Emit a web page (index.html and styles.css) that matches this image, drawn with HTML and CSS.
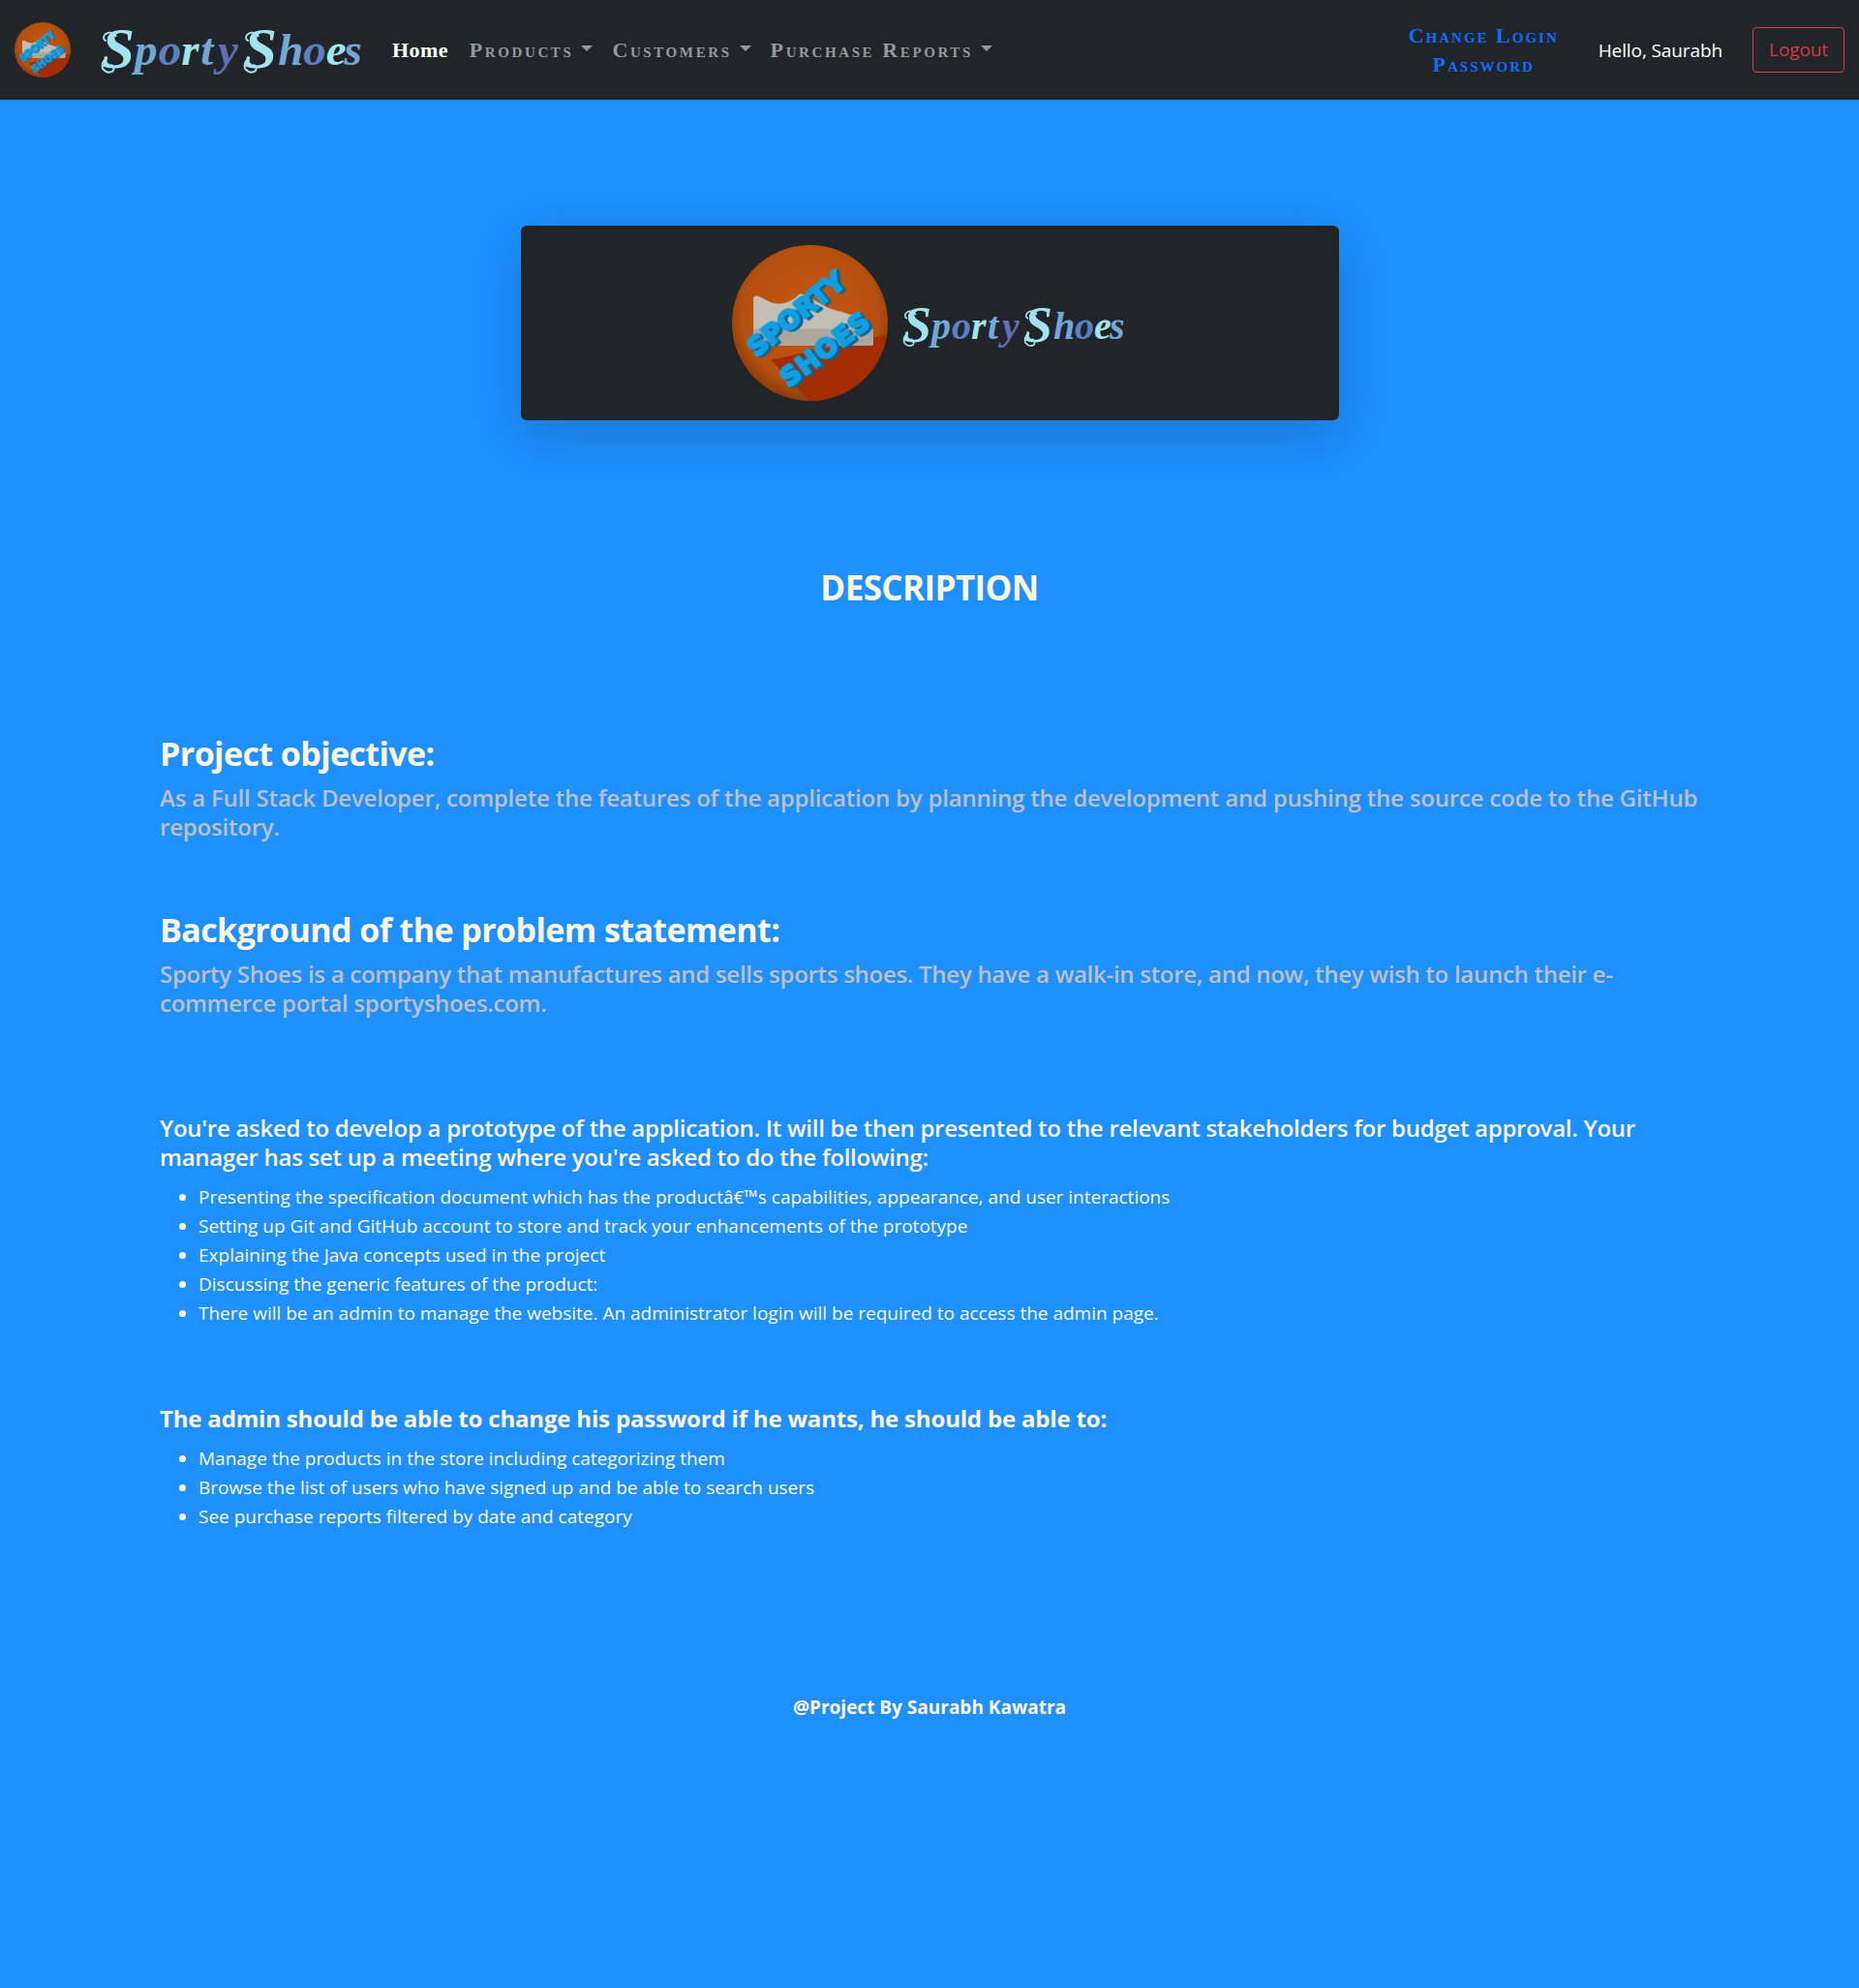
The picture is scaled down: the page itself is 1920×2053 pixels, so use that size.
FILE: index.html
```html
<!DOCTYPE html>
<html lang="en">
<head>
<meta charset="utf-8">
<title>Sporty Shoes</title>
<link rel="stylesheet" href="styles.css">
</head>
<body>
<nav class="navbar">
  <a class="brand" href="#">
    <svg class="badge badge-small" viewBox="0 0 160 160" preserveAspectRatio="none" aria-hidden="true">
      <defs>
        <radialGradient id="orbA" cx="50%" cy="45%" r="55%"><stop offset="0" stop-color="#c4580f"/><stop offset=".8" stop-color="#b54f0f"/><stop offset="1" stop-color="#8c3c0c"/></radialGradient>
        <clipPath id="orbClipA"><circle cx="80" cy="80" r="80"/></clipPath>
      </defs>
      <circle cx="80" cy="80" r="80" fill="url(#orbA)"/>
      <polygon points="40,118 80,160 170,160 170,90 145,95" fill="#a32c02" clip-path="url(#orbClipA)"/>
      <path class="shoe" d="M22 54q2-3 6-1l12 6q16 5 30-9l4 1 26 14 24 7q20 6 21 26v3q0 2-3 2H25q-3 0-3-3z"/>
      <path class="shoe-sole" d="M22 86h123v13q0 3-3 3H25q-3 0-3-3z"/>
      <text class="badge-word" x="0" y="0" transform="translate(25 116) rotate(-39)">SPORTY</text>
      <text class="badge-word word-shoes" x="0" y="0" transform="translate(58 147) rotate(-37)">SHOES</text>
    </svg>
    <svg class="wordmark wordmark-large" viewBox="0 0 227 40" preserveAspectRatio="none" aria-hidden="true">
      <text class="wm" y="30"><tspan class="c1 cap" x="0" y="33">S</tspan><tspan class="c2" x="29" y="30">p</tspan><tspan class="c3" x="50">o</tspan><tspan class="c1" x="70">r</tspan><tspan class="c2" x="87">t</tspan><tspan class="c4" x="102">y</tspan><tspan class="c1 cap" x="125" y="33">S</tspan><tspan class="c2" x="155" y="30">h</tspan><tspan class="c3" x="177">o</tspan><tspan class="c1" x="197">e</tspan><tspan class="c2" x="213">s</tspan></text>
      <path class="curl" d="M13 5Q8-1 3 3Q0 7 4 9M5 24Q-1 28 1 34Q5 39 10 36Q12 32 8 30M138 5Q133-1 128 3Q125 7 129 9M130 24Q124 28 126 34Q130 39 135 36Q137 32 133 30"/>
    </svg>
  </a>
  <ul class="nav-links">
    <li><a class="nav-home" href="#">Home</a></li>
    <li><a class="nav-menu" href="#">Products</a></li>
    <li><a class="nav-menu" href="#">Customers</a></li>
    <li><a class="nav-menu" href="#">Purchase Reports</a></li>
  </ul>
  <div class="nav-right">
    <a class="change-password" href="#">Change Login<br>Password</a>
    <span class="hello">Hello, Saurabh</span>
    <a class="logout" href="#">Logout</a>
  </div>
</nav>

<main class="page">
  <div class="hero-card">
    <svg class="badge badge-large" viewBox="0 0 160 160" aria-hidden="true">
      <defs>
        <radialGradient id="orbB" cx="50%" cy="45%" r="55%"><stop offset="0" stop-color="#c4580f"/><stop offset=".8" stop-color="#b54f0f"/><stop offset="1" stop-color="#8c3c0c"/></radialGradient>
        <clipPath id="orbClipB"><circle cx="80" cy="80" r="80"/></clipPath>
      </defs>
      <circle cx="80" cy="80" r="80" fill="url(#orbB)"/>
      <polygon points="40,118 80,160 170,160 170,90 145,95" fill="#a32c02" clip-path="url(#orbClipB)"/>
      <path class="shoe" d="M22 54q2-3 6-1l12 6q16 5 30-9l4 1 26 14 24 7q20 6 21 26v3q0 2-3 2H25q-3 0-3-3z"/>
      <path class="shoe-sole" d="M22 86h123v13q0 3-3 3H25q-3 0-3-3z"/>
      <text class="badge-word" x="0" y="0" transform="translate(25 116) rotate(-39)">SPORTY</text>
      <text class="badge-word word-shoes" x="0" y="0" transform="translate(58 147) rotate(-37)">SHOES</text>
    </svg>
    <svg class="wordmark wordmark-hero" viewBox="0 0 227 40" preserveAspectRatio="none" aria-hidden="true">
      <text class="wm" y="30"><tspan class="c1 cap" x="0" y="33">S</tspan><tspan class="c2" x="29" y="30">p</tspan><tspan class="c3" x="50">o</tspan><tspan class="c1" x="70">r</tspan><tspan class="c2" x="87">t</tspan><tspan class="c4" x="102">y</tspan><tspan class="c1 cap" x="125" y="33">S</tspan><tspan class="c2" x="155" y="30">h</tspan><tspan class="c3" x="177">o</tspan><tspan class="c1" x="197">e</tspan><tspan class="c2" x="213">s</tspan></text>
      <path class="curl" d="M13 5Q8-1 3 3Q0 7 4 9M5 24Q-1 28 1 34Q5 39 10 36Q12 32 8 30M138 5Q133-1 128 3Q125 7 129 9M130 24Q124 28 126 34Q130 39 135 36Q137 32 133 30"/>
    </svg>
  </div>

  <h1 class="title">DESCRIPTION</h1>

  <section class="intro intro-first">
    <h2>Project objective:</h2>
    <p>As a Full Stack Developer, complete the features of the application by planning the development and pushing the source code to the GitHub repository.</p>
  </section>

  <section class="intro intro-second">
    <h2>Background of the problem statement:</h2>
    <p>Sporty Shoes is a company that manufactures and sells sports shoes. They have a walk-in store, and now, they wish to launch their e-commerce portal sportyshoes.com.</p>
  </section>

  <section class="tasks tasks-first">
    <h3>You're asked to develop a prototype of the application. It will be then presented to the relevant stakeholders for budget approval. Your manager has set up a meeting where you're asked to do the following:</h3>
    <ul>
      <li>Presenting the specification document which has the productâ€™s capabilities, appearance, and user interactions</li>
      <li>Setting up Git and GitHub account to store and track your enhancements of the prototype</li>
      <li>Explaining the Java concepts used in the project</li>
      <li>Discussing the generic features of the product:</li>
      <li>There will be an admin to manage the website. An administrator login will be required to access the admin page.</li>
    </ul>
  </section>

  <section class="tasks tasks-second">
    <h3 class="strong">The admin should be able to change his password if he wants, he should be able to:</h3>
    <ul>
      <li>Manage the products in the store including categorizing them</li>
      <li>Browse the list of users who have signed up and be able to search users</li>
      <li>See purchase reports filtered by date and category</li>
    </ul>
  </section>

  <footer class="credit">@Project By Saurabh Kawatra</footer>
</main>
</body>
</html>
```
FILE: styles.css
```css
* { box-sizing: border-box; }
html, body { margin: 0; padding: 0; }
body {
  min-height: 2053px;
  background: #1e90ff;
  color: #fff8dc;
  font-family: "Open Sans", "Noto Sans", sans-serif;
}
a { text-decoration: none; }

.navbar {
  display: flex;
  align-items: center;
  height: 103px;
  padding: 0 15px;
  background: #212529;
}
.brand { display: flex; align-items: center; gap: 32px; }
.badge { display: block; flex: none; }
.badge-small { width: 58px; height: 57px; }
.badge-large { width: 161px; height: 161px; }
.shoe { fill: #c4bfb4; }
.shoe-sole { fill: #aca69e; }
.badge-word {
  font-family: "DejaVu Sans", sans-serif;
  font-weight: 700;
  font-size: 27px;
  fill: #129fe2;
  stroke: #129fe2;
  stroke-width: 2.5px;
  stroke-linejoin: round;
  filter: drop-shadow(2px 3px 0 #0b6594);
}
.word-shoes { letter-spacing: 1px; }
.wordmark { display: block; flex: none; overflow: visible; }
.wordmark-large { width: 267px; height: 46px; margin-top: 6px; }
.wordmark-hero { width: 227px; height: 40px; margin-top: 12px; }
.wm {
  font-family: "Liberation Serif", serif;
  font-style: italic;
  font-weight: 700;
  font-size: 40px;
}
.wm .cap { font-size: 52px; }
.c1 { fill: #a2e4ee; }
.c2 { fill: #72a8d8; }
.c3 { fill: #5f80c0; }
.c4 { fill: #6070b4; }
.curl { fill: none; stroke: #a2e4ee; stroke-width: 1.6; }

.nav-links {
  display: flex;
  align-items: center;
  gap: 20px;
  margin: 0 0 0 33px;
  padding: 0;
  list-style: none;
}
.nav-home {
  margin-right: 2px;
  color: #fff;
  font-family: "Liberation Serif", serif;
  font-weight: 700;
  font-size: 22px;
  letter-spacing: .4px;
}
.nav-menu {
  display: inline-flex;
  align-items: center;
  color: #97989a;
  font-family: "Liberation Serif", serif;
  font-weight: 700;
  font-variant: small-caps;
  font-size: 22px;
  letter-spacing: 2.6px;
}
.nav-menu::after {
  content: "";
  margin-left: 8px;
  margin-top: -3px;
  border-top: 6px solid currentColor;
  border-left: 6px solid transparent;
  border-right: 6px solid transparent;
}

.nav-right { display: flex; align-items: center; margin-left: auto; }
.change-password {
  width: 155px;
  color: #0d6efd;
  font-family: "Liberation Serif", serif;
  font-weight: 700;
  font-variant: small-caps;
  font-size: 22px;
  letter-spacing: 2px;
  line-height: 30px;
  text-align: center;
  white-space: nowrap;
}
.hello {
  margin-left: 41px;
  color: #fff;
  font-size: 19px;
  letter-spacing: -0.1px;
}
.logout {
  margin-left: 31px;
  padding: 8px 16px;
  border: 1px solid #dc3545;
  border-radius: 4px;
  color: #dc3545;
  font-size: 19px;
  line-height: 29px;
  letter-spacing: -0.1px;
}

.page { padding: 130px 165px 0; }
.hero-card {
  display: flex;
  align-items: center;
  justify-content: center;
  gap: 16px;
  width: 845px;
  height: 201px;
  margin: 0 auto;
  padding-right: 5px;
  background: #212529;
  border-radius: 6px;
  box-shadow: 0 16px 48px rgba(0, 0, 0, .175);
}
.title {
  margin: 151px 0 0;
  font-size: 35px;
  line-height: 43px;
  font-weight: 700;
  text-align: center;
  letter-spacing: -0.6px;
}
.intro h2 {
  margin: 0;
  font-size: 34px;
  line-height: 38px;
  font-weight: 700;
  letter-spacing: -0.58px;
}
.intro p {
  margin: 12px 0 0;
  color: #c0c0c0;
  font-size: 24px;
  line-height: 30px;
  font-weight: 600;
  letter-spacing: -0.28px;
}
.intro-first p { letter-spacing: -0.2px; }
.intro-first { margin-top: 131px; }
.intro-second { margin-top: 72px; }
.tasks h3 {
  margin: 0;
  font-size: 24px;
  line-height: 30px;
  font-weight: 600;
  letter-spacing: -0.27px;
}
.tasks h3.strong { font-weight: 700; letter-spacing: -0.18px; }
.tasks ul { margin: 11px 0 0; padding-left: 40px; }
.tasks li {
  font-size: 19px;
  line-height: 30px;
  color: #fff8dc;
}
.tasks-first { margin-top: 99px; }
.tasks-second { margin-top: 79px; }
.credit {
  margin-top: 167px;
  font-size: 19px;
  font-weight: 700;
  line-height: 30px;
  text-align: center;
}
```
